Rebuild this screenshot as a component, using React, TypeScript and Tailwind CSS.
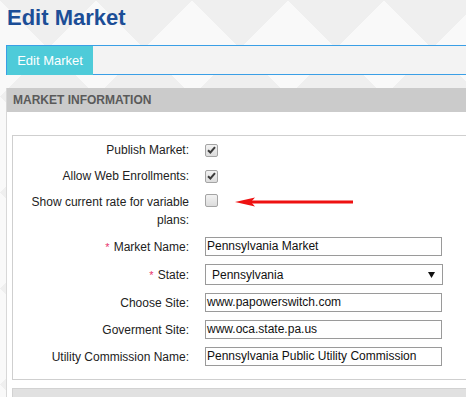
import React from 'react';

const Check = ({ checked }: { checked?: boolean }) => (
  <div className="w-[13px] h-[13px] rounded-[2px] border border-[#a4a4a4] bg-[linear-gradient(#f2f2f2,#dcdcdc)] flex items-center justify-center">
    {checked && (
      <svg width="9" height="8" viewBox="0 0 9 8">
        <path d="M1 4.2 L3.4 6.5 L8 1.2" fill="none" stroke="#3c3c3c" strokeWidth="2" />
      </svg>
    )}
  </div>
);

const Label = ({ text, required }: { text: string; required?: boolean }) => (
  <div className="w-[176px] shrink-0 text-right leading-[18px]">
    {required && <span className="text-[#e8336b] text-[11px] mr-[4px]">*</span>}
    {text}
  </div>
);

const TextField = ({ value }: { value: string }) => (
  <div className="w-[237px] h-[19px] border border-[#9a9a9a] bg-white px-[1px] leading-[17px] text-[#111] whitespace-nowrap overflow-hidden">
    {value}
  </div>
);

const App: React.FC = () => {
  return (
    <div
      className="w-[466px] h-[397px] overflow-hidden text-[12px] text-[#222] bg-[#f4f4f4] bg-[conic-gradient(from_45deg,#f9f9f9_25%,#efefef_0_50%,#f9f9f9_0_75%,#efefef_0)] bg-[length:96px_96px]"
      style={{ fontFamily: '"Liberation Sans", Arial, sans-serif' }}
    >
      <h1 className="pl-[7px] pt-[5px] leading-[25px] text-[22px] font-bold text-[#1c4e97]">Edit Market</h1>

      <div className="mt-[15px] ml-[6px] w-[480px] h-[30px] border-y border-l border-[#3a9fe6] bg-[#f3f3f3] flex items-start">
        <div className="w-[86px] h-[29px] bg-[#4ecbd9] text-white text-[13px] flex items-center justify-center">
          Edit Market
        </div>
      </div>

      <div className="mt-[13px] ml-[6px] w-[480px] border-l border-[#d8d8d8] bg-white">
        <div className="h-[24px] bg-[#cbcbcb] pl-[6px] flex items-center font-bold text-[#5a5a5a]">
          MARKET INFORMATION
        </div>
        <div className="pl-[5px] pt-[23px]">
          <div className="border border-[#cfcfcf] pt-[5px] pb-[13px] flex flex-col gap-[8px]">
            <div className="flex items-center">
              <Label text="Publish Market:" />
              <div className="pl-[16px]"><Check checked /></div>
            </div>
            <div className="flex items-center">
              <Label text="Allow Web Enrollments:" />
              <div className="pl-[16px]"><Check checked /></div>
            </div>
            <div className="flex items-start">
              <div className="w-[176px] shrink-0 text-right leading-[18px]">
                Show current rate for variable
                <br />
                plans:
              </div>
              <div className="pl-[16px] pt-[1px]"><Check /></div>
              <svg className="ml-[17px] mt-[3px]" width="120" height="12" viewBox="0 0 120 12">
                <line x1="14" y1="6" x2="118" y2="6" stroke="#ee1111" strokeWidth="3" />
                <path d="M0 6 L20 1.5 L16 6 L20 10.5 Z" fill="#ee1111" />
              </svg>
            </div>
            <div className="flex items-center">
              <Label text="Market Name:" required />
              <div className="pl-[16px]"><TextField value="Pennsylvania Market" /></div>
            </div>
            <div className="flex items-center">
              <Label text="State:" required />
              <div className="pl-[16px]">
                <div className="w-[238px] h-[21px] border border-[#9a9a9a] bg-white pl-[6px] pr-[7px] flex items-center justify-between text-[#111]">
                  <span>Pennsylvania</span>
                  <svg width="7" height="6" viewBox="0 0 7 6">
                    <path d="M0 0 H7 L3.5 6 Z" fill="#111" />
                  </svg>
                </div>
              </div>
            </div>
            <div className="flex items-center">
              <Label text="Choose Site:" />
              <div className="pl-[16px]"><TextField value="www.papowerswitch.com" /></div>
            </div>
            <div className="flex items-center">
              <Label text="Goverment Site:" />
              <div className="pl-[16px]"><TextField value="www.oca.state.pa.us" /></div>
            </div>
            <div className="flex items-center">
              <Label text="Utility Commission Name:" />
              <div className="pl-[16px]"><TextField value="Pennsylvania Public Utility Commission" /></div>
            </div>
          </div>
          <div className="mt-[8px] h-[30px] bg-[#e1e1e1] border-t border-l border-[#d2d2d2]" />
        </div>
      </div>
    </div>
  );
};

export default App;
